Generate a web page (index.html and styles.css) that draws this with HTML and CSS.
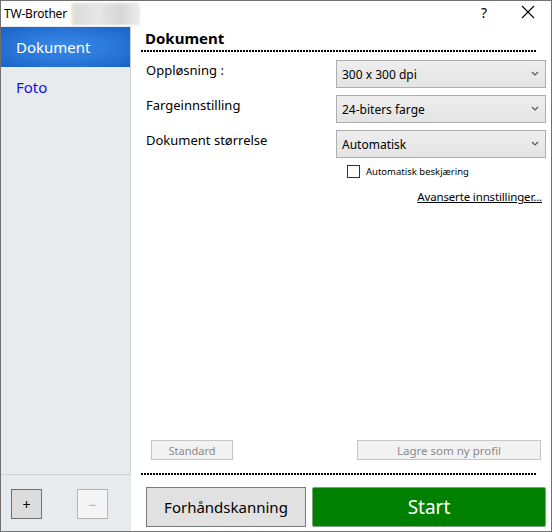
FILE: index.html
```html
<!DOCTYPE html>
<html lang="no">
<head>
<meta charset="utf-8">
<title>TW-Brother</title>
<link rel="stylesheet" href="styles.css">
</head>
<body>
<div class="window">
  <div class="titlebar">
    <span class="title">TW-Brother</span>
    <span class="blur"></span>
    <span class="tb-spacer"></span>
    <span class="help">?</span>
    <span class="close"><svg width="14" height="14" viewBox="0 0 14 14"><path d="M1 1 L13 13 M13 1 L1 13" stroke="#000" stroke-width="1.1" fill="none"/></svg></span>
  </div>
  <div class="content">
    <div class="sidebar">
      <div class="list">
        <div class="item selected">Dokument</div>
        <div class="item">Foto</div>
      </div>
      <div class="side-foot">
        <button class="sq-btn">+</button>
        <button class="sq-btn disabled">−</button>
      </div>
    </div>
    <div class="main">
      <div class="heading">Dokument</div>
      <div class="dots"></div>
      <div class="form">
        <div class="row">
          <span class="label">Oppløsning :</span>
          <div class="select"><span>300 x 300 dpi</span><svg class="chev" width="8" height="5" viewBox="0 0 8 5"><path d="M1 1 L4 4 L7 1" stroke="#555" stroke-width="1.2" fill="none"/></svg></div>
        </div>
        <div class="row">
          <span class="label">Fargeinnstilling</span>
          <div class="select"><span>24-biters farge</span><svg class="chev" width="8" height="5" viewBox="0 0 8 5"><path d="M1 1 L4 4 L7 1" stroke="#555" stroke-width="1.2" fill="none"/></svg></div>
        </div>
        <div class="row">
          <span class="label">Dokument størrelse</span>
          <div class="select"><span>Automatisk</span><svg class="chev" width="8" height="5" viewBox="0 0 8 5"><path d="M1 1 L4 4 L7 1" stroke="#555" stroke-width="1.2" fill="none"/></svg></div>
        </div>
        <div class="check-row">
          <span class="checkbox"></span>
          <span class="check-label">Automatisk beskjæring</span>
        </div>
        <div class="link-row"><a class="link">Avanserte innstillinger...</a></div>
      </div>
      <div class="spacer"></div>
      <div class="profile-row">
        <button class="small-btn std">Standard</button>
        <button class="small-btn save">Lagre som ny profil</button>
      </div>
      <div class="dots bottom-dots"></div>
      <div class="action-row">
        <button class="preview">Forhåndskanning</button>
        <button class="start">Start</button>
      </div>
    </div>
  </div>
</div>
</body>
</html>
```
FILE: styles.css
```css
* { box-sizing: border-box; }
html, body { margin: 0; padding: 0; background: #fff; }
body { font-family: "Noto Sans", "Open Sans", sans-serif; color: #000; }

.window {
  width: 552px;
  height: 532px;
  border: 1px solid #707070;
  display: flex;
  flex-direction: column;
  background: #fff;
}

.titlebar {
  height: 25px;
  display: flex;
  align-items: center;
  flex: none;
}
.title { font-size: 12px; margin-left: 3px; letter-spacing: -0.2px; }
.blur {
  width: 69px;
  height: 22px;
  margin-left: 4px;
  background: linear-gradient(90deg, #f2ecd0 0, #dcdcdc 4px, #e6e6e6 40%, #d6d6d6 70%, #ececec 100%);
  filter: blur(1px);
}
.tb-spacer { flex: 1; }
.help { font-size: 14px; margin-right: 34px; margin-top: -2px; }
.close { width: 14px; height: 14px; margin-right: 16px; margin-top: -4px; display: flex; }

.content { flex: 1; display: flex; min-height: 0; }

.sidebar {
  width: 130px;
  flex: none;
  background: #e8ebee;
  display: flex;
  flex-direction: column;
}
.list {
  flex: 1;
  border: 1px solid #cfd3d7;
  border-top: none;
  border-left: none;
  padding-top: 1px;
}
.item {
  height: 40px;
  display: flex;
  align-items: center;
  padding-left: 15px;
  font-size: 15px;
  color: #1010ee;
}
.item.selected {
  color: #fff;
  background: radial-gradient(ellipse at 50% 50%, #3a8ae4 0%, #2a78da 50%, #1a62c8 100%);
}

.side-foot {
  height: 56px;
  display: flex;
  align-items: center;
  padding-left: 10px;
  gap: 35px;
}
.sq-btn {
  width: 31px;
  height: 30px;
  margin-top: 2px;
  background: #dcdcdc;
  border: 1px solid #707070;
  font-family: "Noto Sans", sans-serif;
  font-size: 14px;
  padding: 0;
  color: #000;
}
.sq-btn.disabled {
  background: #f4f4f4;
  border-color: #b4b4b4;
  color: #b0b0b0;
}

.main {
  flex: 1;
  display: flex;
  flex-direction: column;
  padding-right: 5px;
}
.heading {
  font-size: 15px;
  font-weight: bold;
  margin-left: 14px;
  margin-top: 2px;
  line-height: 20px;
}
.dots {
  height: 2px;
  margin: 2px 10px 0 10px;
  background: repeating-linear-gradient(to right, #000 0, #000 2px, transparent 2px, transparent 3px);
}

.form { padding-left: 15px; margin-top: 8px; }
.row {
  display: flex;
  justify-content: space-between;
  align-items: flex-start;
  height: 28px;
  margin-bottom: 7px;
}
.label { font-size: 13px; margin-top: 1px; }
.select {
  width: 210px;
  height: 28px;
  border: 1px solid #adadad;
  background: linear-gradient(#eeeeee, #e4e4e4);
  display: flex;
  align-items: center;
  justify-content: space-between;
  padding: 0 6px 0 5px;
  font-size: 12px;
}
.chev { margin-top: -2px; }

.check-row {
  display: flex;
  align-items: center;
  margin-left: 201px;
  margin-top: -2px;
  height: 16px;
}
.checkbox {
  width: 13px;
  height: 13px;
  border: 1px solid #333;
  background: #fff;
  margin-right: 6px;
}
.check-label { font-size: 9.5px; }

.link-row {
  display: flex;
  justify-content: flex-end;
  margin-top: 10px;
  padding-right: 4px;
}
.link { font-size: 11.5px; letter-spacing: -0.15px; text-decoration: underline; color: #000; }

.spacer { flex: 1; }

.profile-row {
  display: flex;
  justify-content: space-between;
  padding-left: 20px;
  padding-right: 5px;
}
.small-btn {
  height: 20px;
  background: #f2f2f2;
  border: 1px solid #c6c6c6;
  color: #8a8a8a;
  font-family: "Noto Sans", sans-serif;
  font-size: 11px;
  padding: 0;
}
.small-btn.std { width: 82px; }
.small-btn.save { width: 184px; font-size: 11.5px; }

.bottom-dots { margin-top: 13px; }

.action-row {
  display: flex;
  gap: 6px;
  padding-left: 15px;
  margin-top: 12px;
  margin-bottom: 4px;
}
.preview {
  width: 160px;
  height: 40px;
  background: #e1e1e1;
  border: 1px solid #7a7a7a;
  font-family: "Noto Sans", sans-serif;
  font-size: 15px;
  color: #000;
  padding: 0;
}
.start {
  flex: 1;
  height: 40px;
  background: #008000;
  border: 1px solid #7ca37c;
  border-radius: 2px;
  font-family: "Noto Sans", sans-serif;
  font-size: 19px;
  color: #fff;
  padding: 0;
}
```
